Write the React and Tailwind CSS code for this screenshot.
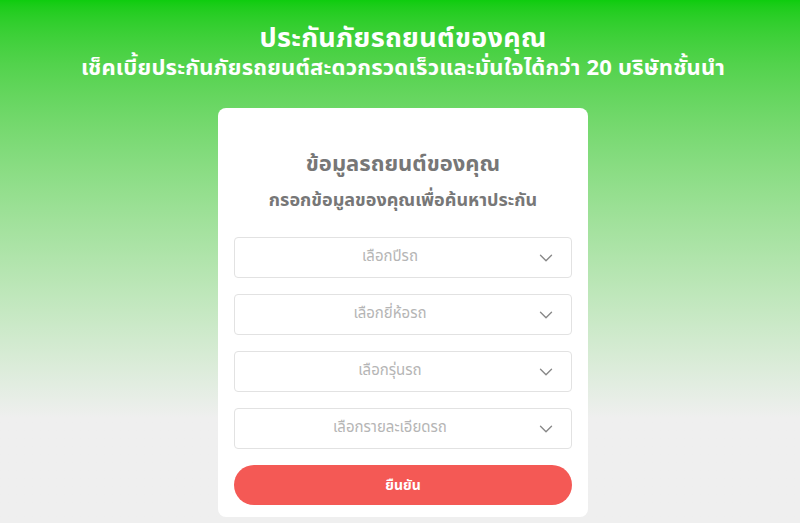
import React from "react";
import { ChevronDown } from "lucide-react";

const selects = ["เลือกปีรถ", "เลือกยี่ห้อรถ", "เลือกรุ่นรถ", "เลือกรายละเอียดรถ"];

export default function App() {
  return (
    <div
      className="w-full min-h-[523px] bg-linear-to-b from-[#0ecc0e] to-[#efefef] to-80% flex flex-col items-center pl-[6px]"
      style={{ fontFamily: '"Noto Sans Thai", "Noto Sans", "Liberation Sans", sans-serif' }}
    >
      <div className="pt-[22px] text-center text-white font-bold">
        <h1 className="text-[27px] leading-[34px] tracking-[0.3px]">ประกันภัยรถยนต์ของคุณ</h1>
        <p className="text-[22px] leading-[26px] tracking-[0.2px]">เช็คเบี้ยประกันภัยรถยนต์สะดวกรวดเร็วและมั่นใจได้กว่า 20 บริษัทชั้นนำ</p>
      </div>
      <div className="mt-[26px] w-[370px] bg-white rounded-lg px-4 pt-[41px] pb-[12px]">
        <h2 className="text-center text-[22px] leading-[32px] font-bold text-[#777777]">ข้อมูลรถยนต์ของคุณ</h2>
        <p className="mt-[8px] text-center text-[18px] leading-[24px] font-bold text-[#777777]">กรอกข้อมูลของคุณเพื่อค้นหาประกัน</p>
        <div className="mt-[24px] flex flex-col gap-[16px]">
          {selects.map((s) => (
            <div key={s} className="relative h-[41px] border border-[#e2e2e2] rounded-[4px] flex items-center justify-center pr-[26px]">
              <span className="text-[15px] text-[#b5b5b5]">{s}</span>
              <ChevronDown className="absolute right-[14px] w-[22px] h-[22px] text-[#888888]" strokeWidth={1.5} />
            </div>
          ))}
        </div>
        <button className="mt-[16px] w-full h-[40px] rounded-full bg-[#f45955] text-white font-bold text-[14px]">ยืนยัน</button>
      </div>
    </div>
  );
}
